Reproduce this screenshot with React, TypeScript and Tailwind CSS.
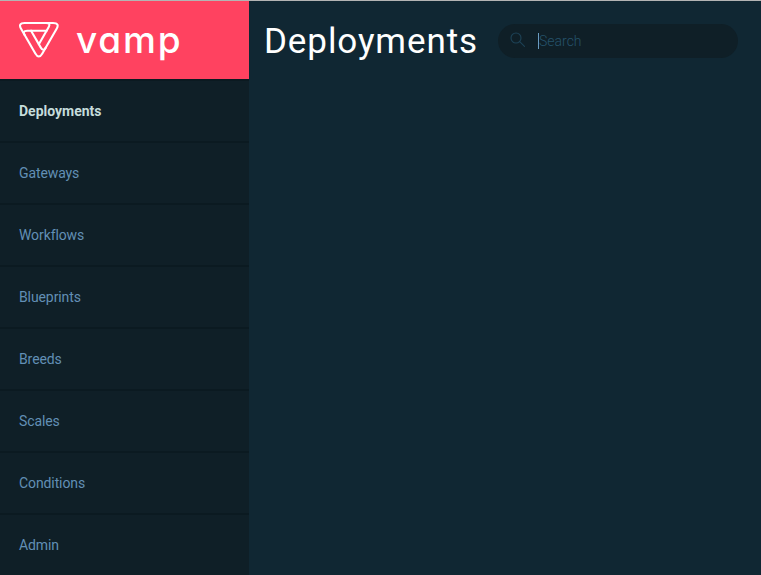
const items: string[] = [
  'Deployments',
  'Gateways',
  'Workflows',
  'Blueprints',
  'Breeds',
  'Scales',
  'Conditions',
  'Admin',
];

function Logo() {
  return (
    <svg
      width="40"
      height="38"
      viewBox="0 0 40 38"
      fill="none"
      stroke="#fff"
      strokeWidth="2.1"
      strokeLinejoin="round"
      strokeLinecap="round"
      className="shrink-0"
    >
      <path d="M5.7 2H34Q41 2 37.5 8.06L23.35 32.5Q19.85 38.6 16.35 32.5L2.2 8.06Q-1.3 2 5.7 2Z" />
      <path d="M27.1 2Q32.1 2 29.6 6.3L19.85 23.2" />
      <path d="M5.65 14Q3.15 9.7 8.15 9.7H27.65" />
      <path d="M26.8 26.6Q24.3 30.9 21.8 26.6L12.05 9.7" />
    </svg>
  );
}

function SearchIcon() {
  return (
    <svg width="16" height="16" viewBox="0 0 16 16" fill="none" stroke="#1d4256" strokeWidth="1.1" strokeLinecap="round" className="-mt-0.5">
      <circle cx="6" cy="6" r="5" />
      <path d="M9.7 9.7L14.5 14.3" />
    </svg>
  );
}

export default function App() {
  return (
    <div className="flex h-[575px] w-[761px] overflow-hidden border-t border-[#b4b4b4] bg-[#102733] font-[Roboto,sans-serif]">
      <aside className="w-[249px] shrink-0 bg-[#0f1f27]">
        <div className="flex h-[78px] items-center bg-[#ff4260] pl-[19px] text-white">
          <Logo />
          <span className="ml-[17px] pb-0.5 font-['Inter',sans-serif] text-[37px] leading-none font-medium tracking-[1.8px] [font-feature-settings:'cv11']">
            vamp
          </span>
        </div>
        <nav>
          {items.map((item, i) => (
            <a
              key={item}
              className={
                'flex h-[62px] items-center border-t-2 border-[#0b1a21] pl-[19px] text-sm ' +
                (i === 0 ? 'font-bold text-[#c5dcdb]' : 'tracking-[-0.1px] text-[#628fb5]')
              }
            >
              {item}
            </a>
          ))}
        </nav>
      </aside>
      <main className="flex-1">
        <header className="flex h-20 items-center pl-[15px]">
          <h1 className="w-[234px] pt-px text-[35px] leading-none tracking-[0.9px] text-white">Deployments</h1>
          <div className="flex h-[34px] w-[240px] items-center rounded-full bg-[#0f1f27] pl-3">
            <SearchIcon />
            <span className="ml-3 h-4 w-px bg-[#6a9cc0]" />
            <span className="text-sm font-light text-[#25536b]">Search</span>
          </div>
        </header>
      </main>
    </div>
  );
}
